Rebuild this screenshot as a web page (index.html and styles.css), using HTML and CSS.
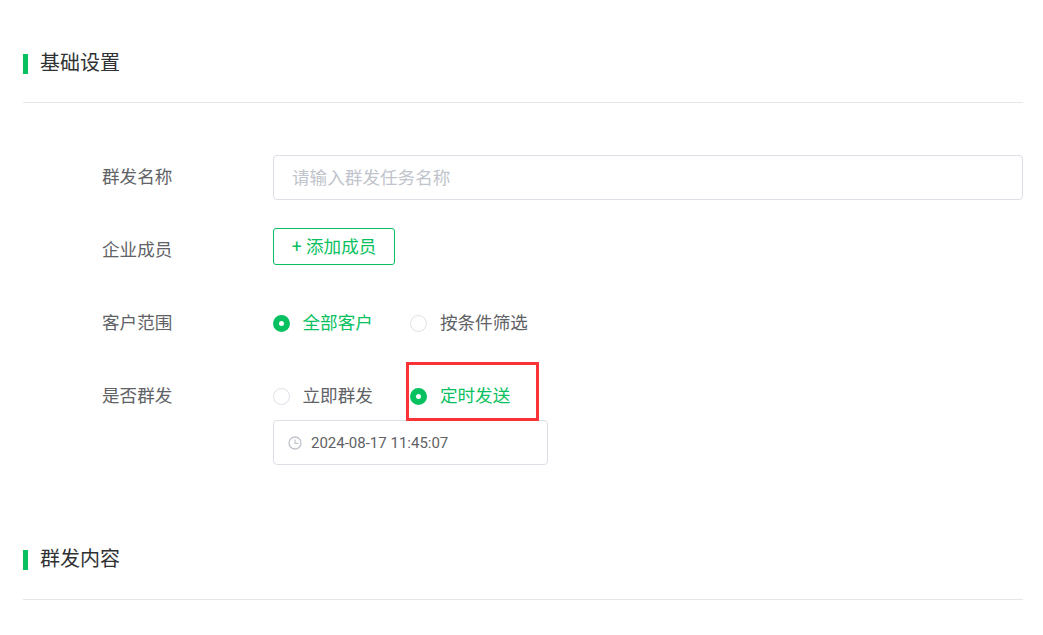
FILE: index.html
```html
<!DOCTYPE html>
<html lang="zh-CN">
<head>
    <meta charset="UTF-8">
    <meta name="viewport" content="width=device-width, initial-scale=1.0">
    <title>群发设置</title>
    <link rel="stylesheet" href="styles.css">
</head>
<body>
    <div class="page">
        <div class="section-head">
            <span class="section-title">基础设置</span>
        </div>

        <form class="form">
            <div class="form-row">
                <label class="form-label">群发名称</label>
                <div class="form-field">
                    <input class="text-input" type="text" placeholder="请输入群发任务名称">
                </div>
            </div>

            <div class="form-row">
                <label class="form-label">企业成员</label>
                <div class="form-field">
                    <button class="add-btn" type="button">+ 添加成员</button>
                </div>
            </div>

            <div class="form-row">
                <label class="form-label">客户范围</label>
                <div class="form-field radios">
                    <span class="radio checked"><i class="radio-dot"></i>全部客户</span>
                    <span class="radio"><i class="radio-dot"></i>按条件筛选</span>
                </div>
            </div>

            <div class="form-row last">
                <label class="form-label">是否群发</label>
                <div class="form-field">
                    <div class="radios">
                        <span class="radio"><i class="radio-dot"></i>立即群发</span>
                        <span class="radio checked"><i class="radio-dot"></i>定时发送</span>
                    </div>
                    <div class="date-input">
                        <svg class="clock" viewBox="0 0 14 14" width="14" height="14">
                            <circle cx="7" cy="7" r="6" fill="none" stroke="#c0c4cc" stroke-width="1.3"/>
                            <path d="M7 3.6V7.4H10.4" fill="none" stroke="#c0c4cc" stroke-width="1.2"/>
                        </svg>
                        <span>2024-08-17 11:45:07</span>
                    </div>
                </div>
            </div>
        </form>

        <div class="section-head second">
            <span class="section-title">群发内容</span>
        </div>

        <!-- red annotation box around the selected option -->
        <div class="highlight"></div>
    </div>
</body>
</html>
```

FILE: styles.css
```css
html, body {
    height: 100%;
}
body {
    margin: 0;
    background-color: #fff;
    font-family: Roboto, "Noto Sans CJK SC", sans-serif;
    color: #606266;
    overflow: hidden;
}
.page {
    position: relative;
    padding: 44px 20px 0 23px;
}
.section-head {
    height: 59px;
    box-sizing: border-box;
    padding-top: 10px;
    border-bottom: 1px solid #e6e6e6;
}
.section-head.second {
    height: 60px;
}
.section-title {
    display: block;
    height: 20px;
    padding-left: 12px;
    border-left: 5px solid #07c160;
    font-size: 20px;
    line-height: 18px;
    color: #303133;
}
.form {
    padding: 52px 0 75px;
}
.form-row {
    display: flex;
    margin-bottom: 28px;
}
.form-row.last {
    margin-bottom: 0;
}
.form-label {
    width: 250px;
    padding-left: 79px;
    box-sizing: border-box;
    font-size: 17.6px;
    line-height: 45px;
}
.form-field {
    flex: 1;
}
.text-input {
    display: block;
    width: 100%;
    height: 45px;
    box-sizing: border-box;
    padding: 0 18px;
    border: 1px solid #dcdfe6;
    border-radius: 4px;
    font-family: inherit;
    font-size: 17.6px;
    color: #606266;
    outline: none;
}
.text-input::placeholder {
    color: #c0c4cc;
}
.add-btn {
    display: block;
    width: 122px;
    height: 37px;
    padding: 0 0 2px;
    border: 1px solid #07c160;
    border-radius: 3px;
    background-color: #fff;
    font-family: inherit;
    font-size: 17.6px;
    color: #07c160;
}
.radios {
    display: flex;
    align-items: center;
    height: 45px;
    margin-bottom: 1px;
    font-size: 17.6px;
    line-height: 45px;
}
.form-row:nth-child(3) .radios {
    margin-bottom: 0;
}
.radio {
    display: flex;
    align-items: center;
    margin-right: 37.5px;
}
.radio-dot {
    width: 17px;
    height: 17px;
    box-sizing: border-box;
    margin-right: 12.5px;
    border: 1px solid #dcdfe6;
    border-radius: 50%;
}
.radio.checked {
    color: #07c160;
}
.radio.checked .radio-dot {
    border: 6px solid #07c160;
    background-color: #fff;
}
.date-input {
    display: flex;
    align-items: center;
    width: 275px;
    height: 45px;
    box-sizing: border-box;
    padding-left: 14px;
    border: 1px solid #dcdfe6;
    border-radius: 4px;
    font-size: 15px;
}
.clock {
    margin-right: 9px;
}
.highlight {
    position: absolute;
    left: 406px;
    top: 362px;
    width: 133px;
    height: 59px;
    box-sizing: border-box;
    border: 3px solid #fb3237;
}
```
